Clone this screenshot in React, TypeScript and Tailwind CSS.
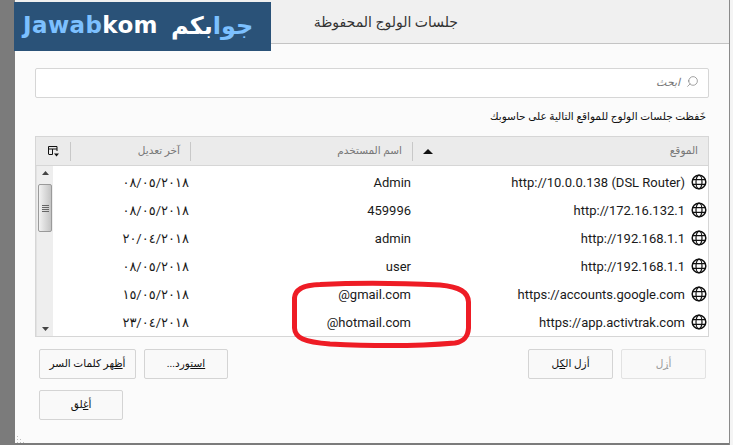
import React from 'react';
import { Search } from 'lucide-react';

const rows = [
  { site: 'http://10.0.0.138 (DSL Router)', user: 'Admin', date: '٠٨/٠٥/٢٠١٨' },
  { site: 'http://172.16.132.1', user: '459996', date: '٠٨/٠٥/٢٠١٨' },
  { site: 'http://192.168.1.1', user: 'admin', date: '٢٠/٠٤/٢٠١٨' },
  { site: 'http://192.168.1.1', user: 'user', date: '٠٨/٠٥/٢٠١٨' },
  { site: 'https://accounts.google.com', user: '@gmail.com', date: '١٥/٠٥/٢٠١٨' },
  { site: 'https://app.activtrak.com', user: '@hotmail.com', date: '٢٣/٠٤/٢٠١٨' },
];

const Globe = () => (
  <svg width="16" height="16" viewBox="0 0 16 16" fill="none" stroke="#111" strokeWidth="1.5" className="shrink-0 -mt-[2px]">
    <circle cx="8" cy="8" r="6.8" />
    <ellipse cx="8" cy="8" rx="3" ry="6.8" strokeWidth="1.2" />
    <path d="M1.4 5.6h13.2M1.4 10.4h13.2" strokeWidth="1.2" />
  </svg>
);

const Btn = ({ children, className = '', disabled = false }: { children: React.ReactNode; className?: string; disabled?: boolean }) => (
  <div
    className={`h-[30px] flex items-center justify-center rounded-[2px] border bg-[#f9f9f9] text-[10.5px] ${
      disabled ? 'text-[#9a9a9a] border-[#e2e2e2]' : 'text-[#111] border-[#d4d4d4]'
    } ${className}`}
  >
    {children}
  </div>
);

export default function App() {
  return (
    <div className="relative w-[733px] h-[445px] overflow-hidden bg-[#7b7b7b] pl-[15px] font-['Roboto','DejaVu_Sans',sans-serif]" dir="ltr">
      {/* logo pasted on top of the dialog */}
      <div className="absolute left-[14px] top-[2px] z-10 w-[257px] h-[49px] bg-[#2a5278] flex items-center gap-[13px] pl-[9px] pb-[2px] font-['DejaVu_Sans',sans-serif] font-bold leading-none">
        <span className="text-[23px] tracking-[0.4px] text-[#7cc0ff]">
          Jawab<span className="text-white">kom</span>
        </span>
        <span dir="rtl" className="text-[24px] text-white">
          <span className="text-[#7cc0ff]">جوا</span>بكم
        </span>
      </div>

      {/* right edge of the window behind */}
      <div className="absolute right-0 top-0 bottom-0 w-[4px] bg-[#f4f4f4] border-l border-[#8a8a8a]" />

      <div dir="rtl" className="relative w-[714px] h-[444px] bg-[#fbfbfb] flex flex-col border-b border-[#7b7b7b]">
        <div className="h-[44px] shrink-0 bg-[#f0f0f0] border-b border-[#c4c4c4] flex items-center pr-[271px] pt-[2px] text-[14px] text-[#333]">
          جلسات الولوج المحفوظة
        </div>

        <div className="flex flex-col px-[20px] pt-[24px]">
          <div className="h-[30px] bg-white border border-[#d6d6d6] rounded-[2px] flex items-center gap-[6px] pr-[9px] text-[11px] text-[#777]">
            <Search size={13} strokeWidth={1.1} className="text-[#666] -scale-x-100 -mt-[4px]" />
            <span className="italic">ابحث</span>
          </div>

          <div className="h-[38px] flex items-center pr-[3px] text-[10.5px] text-[#111]">
            خَفظت جلسات الولوج للمواقع التالية على حاسوبك
          </div>

          <div className="h-[201px] bg-white border border-[#d6d6d6] border-t-0 flex flex-col">
            <div className="h-[30px] shrink-0 bg-[#ebebeb] border-y border-[#d6d6d6] flex items-center text-[10.5px] text-[#777]">
              <div className="w-[295px] flex items-center justify-between pr-[10px] pl-[10px]">
                <span>الموقع</span>
                <svg width="10" height="5" viewBox="0 0 10 5"><path d="M5 0L10 5H0Z" fill="#111" /></svg>
              </div>
              <div className="w-[222px] h-[19px] flex items-center border-r border-[#c8c8c8] pr-[10px]">اسم المستخدم</div>
              <div className="w-[120px] h-[19px] flex items-center border-r border-[#c8c8c8] pr-[10px]">آخر تعديل</div>
              <div className="flex-1 h-[19px] flex items-center justify-center border-r border-[#c8c8c8]">
                <svg width="11" height="11" viewBox="0 0 11 11" fill="none" stroke="#111">
                  <path d="M.5 8V.5h8.5V5M.5 3h8.5M4.5 3v5.5M.5 8.5h4" />
                  <path d="M6 7.5h5L8.5 10.5Z" fill="#111" stroke="none" />
                </svg>
              </div>
            </div>

            <div className="flex-1 flex min-h-0">
              <div className="flex-1 flex flex-col pt-[3px]">
                {rows.map((r, i) => (
                  <div key={i} className="h-[28px] shrink-0 flex items-center text-[13px] text-[#1a1a1a]">
                    <div className="w-[297px] flex items-center gap-[6px] pr-[1px]">
                      <Globe />
                      <span dir="ltr">{r.site}</span>
                    </div>
                    <div className="w-[222px]">
                      <span dir="ltr">{r.user}</span>
                    </div>
                    <div className="w-[120px]">
                      <span dir="ltr">{r.date}</span>
                    </div>
                  </div>
                ))}
              </div>
              {/* scrollbar */}
              <div className="w-[17px] shrink-0 bg-[#eeeeee] border-l border-[#e2e2e2] flex flex-col items-center justify-between py-[5px] relative">
                <svg width="7" height="4" viewBox="0 0 7 4"><path d="M3.5 0L7 4H0Z" fill="#444" /></svg>
                <svg width="7" height="4" viewBox="0 0 7 4"><path d="M3.5 4L7 0H0Z" fill="#444" /></svg>
                <div className="absolute top-[18px] left-[1px] w-[14px] h-[48px] rounded-[2px] border border-[#9a9a9a] bg-gradient-to-r from-[#f2f2f2] to-[#c4c4c4] flex flex-col items-center justify-center gap-[1px]">
                  <div className="w-[7px] h-[1px] bg-[#666]" />
                  <div className="w-[7px] h-[1px] bg-[#666]" />
                  <div className="w-[7px] h-[1px] bg-[#666]" />
                  <div className="w-[7px] h-[1px] bg-[#666]" />
                </div>
              </div>
            </div>
          </div>

          {/* zero width joiners keep the letters joined across the underlined access keys */}
          <div className="flex justify-between mt-[12px] pr-[3px] pl-[4px]">
            <div className="flex gap-[8px]">
              <Btn disabled className="w-[85px]">
                <span>
                  أ<span className="underline">ز</span>ل
                </span>
              </Btn>
              <Btn className="w-[85px]">
                <span>
                  أزل ال<span className="underline">{'\u200dك\u200d'}</span>{'\u200dل'}
                </span>
              </Btn>
            </div>
            <div className="flex gap-[8px]">
              <Btn className="w-[84px]">
                <span>
                  <span className="underline">{'است\u200d'}</span>{'\u200dورد...'}
                </span>
              </Btn>
              <Btn className="w-[97px]">
                <span>
                  أ<span className="underline">{'ظ\u200d'}</span>{'\u200dهر كلمات السر'}
                </span>
              </Btn>
            </div>
          </div>

          <div className="flex justify-end mt-[11px] pl-[4px]">
            <Btn className="w-[84px]">
              <span>
                أ<span className="underline">{'غ\u200d'}</span>{'\u200dلق'}
              </span>
            </Btn>
          </div>
        </div>

        {/* resize grip */}
        <svg className="absolute left-[1px] bottom-0" width="8" height="8" viewBox="0 0 8 8" fill="#bdbdbd">
          <rect x="1" y="1" width="1" height="1" />
          <rect x="1" y="4" width="1" height="1" />
          <rect x="4" y="4" width="1" height="1" />
          <rect x="1" y="7" width="1" height="1" />
          <rect x="4" y="7" width="1" height="1" />
          <rect x="7" y="7" width="1" height="1" />
        </svg>
      </div>

      {/* red marker round the two e-mail addresses */}
      <svg className="absolute left-[290px] top-[280px]" width="184" height="70" viewBox="0 0 184 70" fill="none">
        <path
          d="M30 4.5C12 5 5 10 4.5 18V48C5 58 14 62 40 64C80 66 130 66 165 63C175 61 178 56 178.5 48V22C178 12 170 7 150 5C110 3 60 3 30 4.5Z"
          stroke="#ee1c25"
          strokeWidth="5"
        />
      </svg>
    </div>
  );
}
